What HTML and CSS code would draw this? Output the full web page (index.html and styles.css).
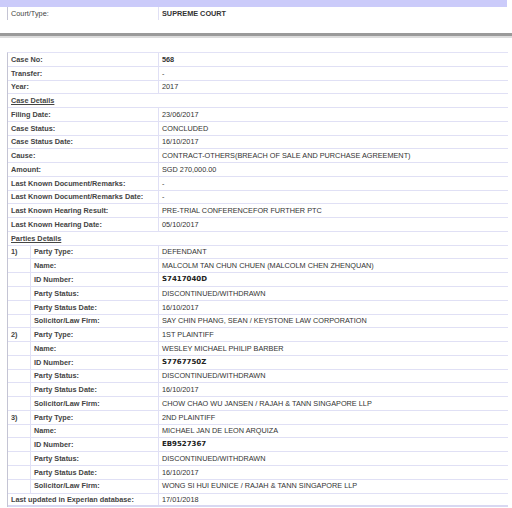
FILE: index.html
```html
<!DOCTYPE html>
<html>
<head>
<meta charset="utf-8">
<link rel="stylesheet" href="styles.css">
</head>
<body>
<div class="page">
  <div class="topband"></div>
  <div class="court">
    <div class="cell lbl-plain">Court/Type:</div>
    <div class="cell val b">SUPREME COURT</div>
  </div>
  <div class="rule"></div>
  <div class="details">
    <div class="row"><div class="cell lbl wide">Case No:</div><div class="cell val b">568</div></div>
    <div class="row"><div class="cell lbl wide">Transfer:</div><div class="cell val">-</div></div>
    <div class="row"><div class="cell lbl wide">Year:</div><div class="cell val">2017</div></div>
    <div class="row"><div class="cell sect">Case Details</div></div>
    <div class="row"><div class="cell lbl wide">Filing Date:</div><div class="cell val">23/06/2017</div></div>
    <div class="row"><div class="cell lbl wide">Case Status:</div><div class="cell val">CONCLUDED</div></div>
    <div class="row"><div class="cell lbl wide">Case Status Date:</div><div class="cell val">16/10/2017</div></div>
    <div class="row"><div class="cell lbl wide">Cause:</div><div class="cell val">CONTRACT-OTHERS(BREACH OF SALE AND PURCHASE AGREEMENT)</div></div>
    <div class="row"><div class="cell lbl wide">Amount:</div><div class="cell val">SGD 270,000.00</div></div>
    <div class="row"><div class="cell lbl wide">Last Known Document/Remarks:</div><div class="cell val">-</div></div>
    <div class="row"><div class="cell lbl wide">Last Known Document/Remarks Date:</div><div class="cell val">-</div></div>
    <div class="row"><div class="cell lbl wide">Last Known Hearing Result:</div><div class="cell val">PRE-TRIAL CONFERENCEFOR FURTHER PTC</div></div>
    <div class="row"><div class="cell lbl wide">Last Known Hearing Date:</div><div class="cell val">05/10/2017</div></div>
    <div class="row"><div class="cell sect">Parties Details</div></div>

    <div class="row"><div class="cell num">1)</div><div class="cell lbl">Party Type:</div><div class="cell val">DEFENDANT</div></div>
    <div class="row"><div class="cell num"></div><div class="cell lbl">Name:</div><div class="cell val">MALCOLM TAN CHUN CHUEN (MALCOLM CHEN ZHENQUAN)</div></div>
    <div class="row"><div class="cell num"></div><div class="cell lbl">ID Number:</div><div class="cell val id">S7417040D</div></div>
    <div class="row"><div class="cell num"></div><div class="cell lbl">Party Status:</div><div class="cell val">DISCONTINUED/WITHDRAWN</div></div>
    <div class="row"><div class="cell num"></div><div class="cell lbl">Party Status Date:</div><div class="cell val">16/10/2017</div></div>
    <div class="row"><div class="cell num"></div><div class="cell lbl">Solicitor/Law Firm:</div><div class="cell val">SAY CHIN PHANG, SEAN / KEYSTONE LAW CORPORATION</div></div>

    <div class="row"><div class="cell num">2)</div><div class="cell lbl">Party Type:</div><div class="cell val">1ST PLAINTIFF</div></div>
    <div class="row"><div class="cell num"></div><div class="cell lbl">Name:</div><div class="cell val">WESLEY MICHAEL PHILIP BARBER</div></div>
    <div class="row"><div class="cell num"></div><div class="cell lbl">ID Number:</div><div class="cell val id">S7767750Z</div></div>
    <div class="row"><div class="cell num"></div><div class="cell lbl">Party Status:</div><div class="cell val">DISCONTINUED/WITHDRAWN</div></div>
    <div class="row"><div class="cell num"></div><div class="cell lbl">Party Status Date:</div><div class="cell val">16/10/2017</div></div>
    <div class="row"><div class="cell num"></div><div class="cell lbl">Solicitor/Law Firm:</div><div class="cell val">CHOW CHAO WU JANSEN / RAJAH &amp; TANN SINGAPORE LLP</div></div>

    <div class="row"><div class="cell num">3)</div><div class="cell lbl">Party Type:</div><div class="cell val">2ND PLAINTIFF</div></div>
    <div class="row"><div class="cell num"></div><div class="cell lbl">Name:</div><div class="cell val">MICHAEL JAN DE LEON ARQUIZA</div></div>
    <div class="row"><div class="cell num"></div><div class="cell lbl">ID Number:</div><div class="cell val id">EB9527367</div></div>
    <div class="row"><div class="cell num"></div><div class="cell lbl">Party Status:</div><div class="cell val">DISCONTINUED/WITHDRAWN</div></div>
    <div class="row"><div class="cell num"></div><div class="cell lbl">Party Status Date:</div><div class="cell val">16/10/2017</div></div>
    <div class="row"><div class="cell num"></div><div class="cell lbl">Solicitor/Law Firm:</div><div class="cell val">WONG SI HUI EUNICE / RAJAH &amp; TANN SINGAPORE LLP</div></div>

    <div class="row last"><div class="cell lbl wide">Last updated in Experian database:</div><div class="cell val">17/01/2018</div></div>
  </div>
</div>
</body>
</html>
```

FILE: styles.css
```css
html, body {
  margin: 0;
  padding: 0;
  background: #ffffff;
}

body {
  font-family: "Liberation Sans", Arial, sans-serif;
  font-size: 7.3px;
  color: #333333;
}

.page {
  width: 512px;
}

.topband {
  width: 507px;
  height: 7px;
  background: #cbcbfa;
}

.court {
  display: grid;
  grid-template-columns: 150px 350px;
  margin-left: 7px;
  height: 13px;
  border-left: 1px solid #c4c4d4;
}

.rule {
  margin-top: 13px;
  height: 3px;
  background: #9a9a9a;
  border-bottom: 2px solid #dcdcdc;
}

.details {
  margin-top: 14px;
  margin-left: 7px;
  width: 500px;
  border-top: 1px solid #e2e2f6;
  border-left: 1px solid #c4c4d4;
  display: grid;
  grid-auto-rows: 13.78px;
}

.row {
  display: grid;
  grid-template-columns: 23px 127px 350px;
  border-bottom: 1px solid #e0e0f5;
  box-sizing: border-box;
}

.row.last {
  border-bottom: 2px solid #d8d8f2;
}

.cell {
  display: flex;
  align-items: center;
  padding-left: 3px;
  white-space: nowrap;
  overflow: hidden;
  line-height: 1;
}

.lbl, .num {
  font-weight: bold;
  color: #444444;
}

.lbl-plain {
  color: #444444;
}

.court .val {
  border-left: 1px solid #e0e0f5;
}

.wide {
  grid-column: 1 / 3;
}

.num {
  border-right: 1px solid #e0e0f5;
}

.val {
  grid-column: 3;
  border-left: 1px solid #e0e0f5;
}

.court .lbl-plain {
  grid-column: 1;
}

.court .val {
  grid-column: 2;
}

.b {
  font-weight: bold;
}

.sect {
  grid-column: 1 / 4;
  font-weight: bold;
  text-decoration: underline;
  color: #444444;
}

.id {
  font-family: "DejaVu Sans", Verdana, sans-serif;
  font-weight: bold;
  font-size: 7px;
  color: #222222;
}
```
